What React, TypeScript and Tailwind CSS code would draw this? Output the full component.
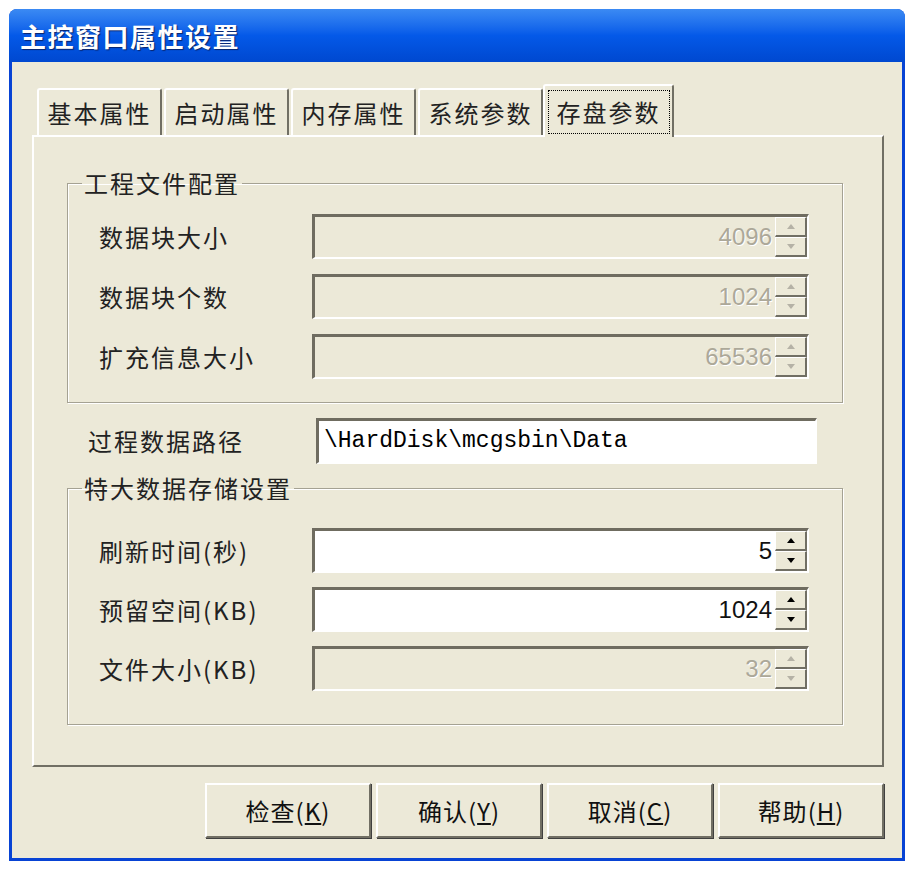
import React from "react";

const CJK = "font-['Noto_Sans_CJK_SC','Noto_Sans',sans-serif]";

function Spinner({ disabled }: { disabled?: boolean }) {
  const tri = disabled ? "#b5b2a6" : "#000";
  return (
    <div className="w-[32px] h-full flex flex-col bg-[#ECE9D8]">
      {[0, 1].map((i) => (
        <div
          key={i}
          className="flex-1 flex items-center justify-center border-t border-l border-white border-r-2 border-b-2 border-r-[#716f64] border-b-[#716f64]"
        >
          <svg width="8" height="5" viewBox="0 0 8 5">
            {i === 0 ? (
              <polygon points="4,0 8,5 0,5" fill={tri} />
            ) : (
              <polygon points="0,0 8,0 4,5" fill={tri} />
            )}
          </svg>
        </div>
      ))}
    </div>
  );
}

function SpinField({ value, disabled }: { value: string; disabled?: boolean }) {
  return (
    <div
      className={`w-[497px] h-[45px] flex border-t-[3px] border-l-[3px] border-[#6f6c60] border-b-2 border-r-2 border-b-white border-r-white ${
        disabled ? "bg-[#ECE9D8]" : "bg-white"
      }`}
    >
      <div
        className={`flex-1 flex items-center justify-end pr-[3px] text-[24px] font-['Liberation_Sans',sans-serif] ${
          disabled ? "text-[#aca899] [text-shadow:1px_1px_0_#fff]" : "text-[#111]"
        }`}
      >
        {value}
      </div>
      <Spinner disabled={disabled} />
    </div>
  );
}

function Row({ label, value, disabled }: { label: string; value: string; disabled?: boolean }) {
  return (
    <div className="flex items-center">
      <div className={`w-[213px] text-[24px] tracking-[2px] text-[#222] ${CJK}`}>{label}</div>
      <SpinField value={value} disabled={disabled} />
    </div>
  );
}

function Group({ title, children, className }: { title: string; children: React.ReactNode; className?: string }) {
  return (
    <fieldset className={`border border-[#a5a293] shadow-[inset_1px_1px_0_#fff,1px_1px_0_#fff] ${className ?? ""}`}>
      <legend className={`ml-[14px] px-[2px] text-[24px] leading-[30px] tracking-[2px] text-[#222] ${CJK}`}>
        {title}
      </legend>
      <div className="pl-[31px]">{children}</div>
    </fieldset>
  );
}

const tabs = ["基本属性", "启动属性", "内存属性", "系统参数", "存盘参数"];

function Button({ text, hot }: { text: string; hot: string }) {
  return (
    <button
      className={`w-[166px] h-[55px] bg-[#ECE9D8] border-t-2 border-l-2 border-white border-r-2 border-b-2 border-r-[#716f64] border-b-[#716f64] shadow-[1px_1px_0_#404040] text-[24px] tracking-[1px] text-[#111] ${CJK}`}
    >
      {text}(<span className="underline underline-offset-2">{hot}</span>)
    </button>
  );
}

export default function App() {
  return (
    <div className="min-h-screen bg-white pt-[9px] pl-[9px]">
      <div className="w-[896px] h-[852px] flex flex-col rounded-t-[8px] overflow-hidden bg-[#0843d4]">
        {/* Title bar */}
        <div className="h-[53px] flex items-center px-[11px] bg-linear-to-b from-[#3b8af3] via-[#0459e8] to-[#0048d0]">
          <span className={`text-white text-[26px] font-bold tracking-[1.5px] [text-shadow:1px_1px_1px_#0a246a] ${CJK}`}>
            主控窗口属性设置
          </span>
        </div>

        {/* Body */}
        <div className="flex-1 mx-[3px] mb-[3px] bg-[#ECE9D8] flex flex-col pl-[20px] pr-[18px]">
          {/* Tab strip */}
          <div className="mt-[22px] h-[51px] flex items-end pl-[5px] gap-[2px]">
            {tabs.map((t, i) => {
              const sel = i === tabs.length - 1;
              return (
                <div
                  key={t}
                  className={`w-[125px] flex items-center justify-center border-t-2 border-l-2 border-white border-r-2 border-r-[#716f64] rounded-t-[3px] bg-[#ECE9D8] ${
                    sel ? "h-[53px] -mb-[2px] relative z-10 -ml-[2px] w-[131px]" : "h-[47px]"
                  }`}
                >
                  <span
                    className={`text-[24px] tracking-[2px] text-[#222] ${CJK} ${
                      sel ? "border border-dotted border-black px-[8px] py-[3px] leading-[36px]" : ""
                    }`}
                  >
                    {t}
                  </span>
                </div>
              );
            })}
          </div>

          {/* Tab panel */}
          <div className="h-[632px] border-t-2 border-l-2 border-white border-r-2 border-b-2 border-r-[#716f64] border-b-[#716f64] pl-[33px] pr-[39px] pt-[31px] flex flex-col">
            <Group title="工程文件配置" className="pb-[23px]">
              <div className="mt-[16px] flex flex-col gap-[15px]">
                <Row label="数据块大小" value="4096" disabled />
                <Row label="数据块个数" value="1024" disabled />
                <Row label="扩充信息大小" value="65536" disabled />
              </div>
            </Group>

            <div className="mt-[15px] flex items-center pl-[21px]">
              <div className={`w-[228px] text-[24px] tracking-[2px] text-[#222] ${CJK}`}>过程数据路径</div>
              <div className="w-[501px] h-[46px] flex items-center pl-[5px] bg-white border-t-[3px] border-l-[3px] border-[#6f6c60] border-b-2 border-r-2 border-b-white border-r-white text-[23px] text-black font-['Liberation_Mono',monospace]">
                \HardDisk\mcgsbin\Data
              </div>
            </div>

            <Group title="特大数据存储设置" className="mt-[9px] pb-[33px]">
              <div className="mt-[25px] flex flex-col gap-[14px]">
                <Row label="刷新时间(秒)" value="5" />
                <Row label="预留空间(KB)" value="1024" />
                <Row label="文件大小(KB)" value="32" disabled />
              </div>
            </Group>
          </div>

          {/* Buttons */}
          <div className="mt-[16px] flex justify-end gap-[5px]">
            <Button text="检查" hot="K" />
            <Button text="确认" hot="Y" />
            <Button text="取消" hot="C" />
            <Button text="帮助" hot="H" />
          </div>
        </div>
      </div>
    </div>
  );
}
